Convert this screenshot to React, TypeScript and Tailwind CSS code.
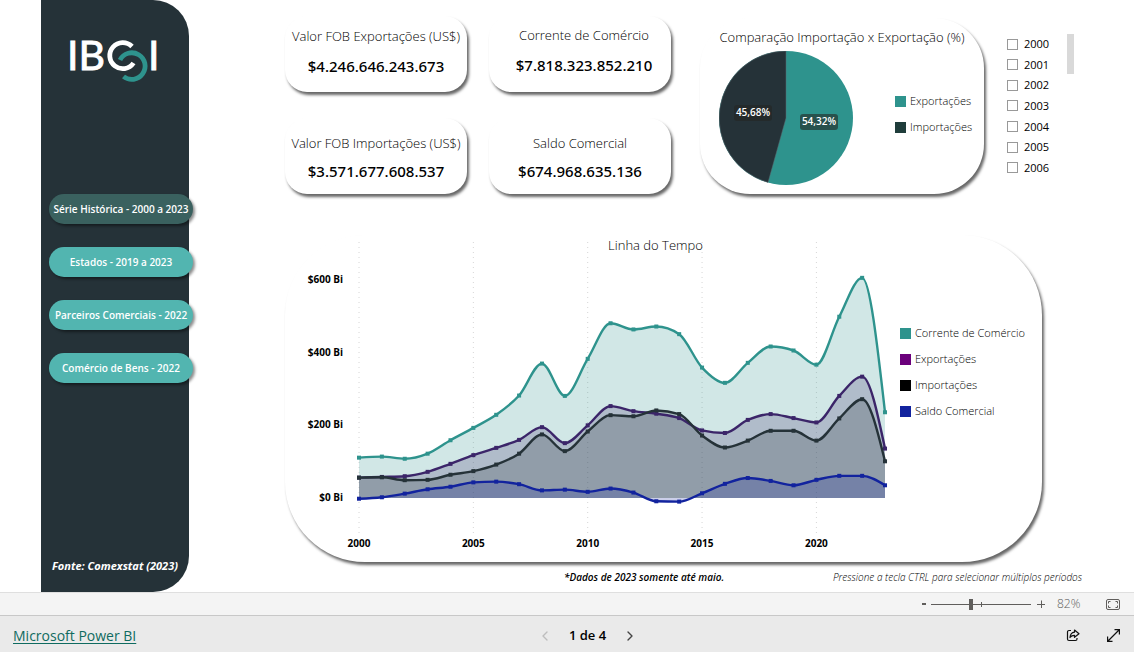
import { useState } from 'react';
import { ChevronLeft, ChevronRight } from 'lucide-react';

type Serie = { nome: string; cor: string; legenda: string; valores: number[] };

const PAGINAS = ['Série Histórica - 2000 a 2023', 'Estados - 2019 a 2023', 'Parceiros Comerciais - 2022', 'Comércio de Bens - 2022'];

const INDICADORES = [
  { titulo: 'Valor FOB Exportações (US$)', valor: '$4.246.646.243.673', classe: 'gap-2.5 pb-1.5' },
  { titulo: 'Corrente de Comércio', valor: '$7.818.323.852.210', classe: 'gap-2.5 pb-2 pl-2' },
  { titulo: 'Valor FOB Importações (US$)', valor: '$3.571.677.608.537', classe: 'gap-2 pt-0.5' },
  { titulo: 'Saldo Comercial', valor: '$674.968.635.136', classe: 'gap-2 pt-0.5' },
];

const ANOS_FILTRO = [2000, 2001, 2002, 2003, 2004, 2005, 2006];

// Valores anuais em bilhões de US$, 2000 a 2023
const SERIES: Serie[] = [
  {
    nome: 'Corrente de Comércio', cor: '#2e938d', legenda: 'bg-[#2e938d]',
    valores: [111, 114, 108, 122, 159, 193, 229, 282, 370, 281, 383, 481, 464, 472, 451, 359, 317, 372, 417, 406, 367, 499, 606, 236],
  },
  {
    nome: 'Exportações', cor: '#3b2569', legenda: 'bg-[#6b007b]',
    valores: [56, 58, 60, 72, 94, 118, 138, 160, 195, 151, 200, 253, 239, 232, 220, 186, 179, 215, 231, 220, 208, 281, 334, 136],
  },
  {
    nome: 'Importações', cor: '#253238', legenda: 'bg-black',
    valores: [56, 57, 49, 50, 64, 74, 92, 122, 175, 129, 183, 228, 225, 241, 231, 172, 139, 158, 185, 185, 158, 219, 272, 101],
  },
  {
    nome: 'Saldo Comercial', cor: '#12239e', legenda: 'bg-[#12239e]',
    valores: [-2, 2, 12, 24, 31, 43, 45, 38, 21, 23, 17, 26, 15, -9, -10, 13, 39, 55, 47, 35, 50, 61, 61, 35],
  },
];

const X0 = 74;
const PASSO = 22.87;
const Y0 = 263;
const px = (i: number) => X0 + i * PASSO;
const py = (v: number) => Y0 - v * 0.3633;

// Interpolação cúbica monótona em x
function curva(valores: number[]) {
  const ys = valores.map(py);
  const n = ys.length;
  const d = ys.slice(1).map((y, i) => (y - ys[i]) / PASSO);
  const m = ys.map((_, i) => {
    if (i === 0 || i === n - 1) return 0;
    const [a, b] = [d[i - 1], d[i]];
    if (a * b <= 0) return 0;
    return Math.sign(a) * Math.min(Math.abs(a), Math.abs(b), Math.abs(a + b) / 4) * 2;
  });
  m[0] = (3 * d[0] - m[1]) / 2;
  m[n - 1] = (3 * d[n - 2] - m[n - 2]) / 2;
  let path = `M${px(0)},${ys[0]}`;
  for (let i = 1; i < n; i++) {
    const t = PASSO / 3;
    path += `C${px(i - 1) + t},${ys[i - 1] + m[i - 1] * t} ${px(i) - t},${ys[i] - m[i] * t} ${px(i)},${ys[i]}`;
  }
  return path;
}

function Logo() {
  return (
    <svg viewBox="0 0 148 90" className="w-full" role="img" aria-label="IBCI">
      <g fill="#fff" stroke="#fff" strokeWidth="0.9" fontFamily="Lato, sans-serif" fontSize="41">
        <text x="26" y="70">IB</text>
        <text x="107" y="70">I</text>
      </g>
      <path d="M91 46.5A13 13 0 1 0 92.5 63" fill="none" stroke="#fff" strokeWidth="4.8" />
      <path d="M79 60A13.3 13.3 0 1 1 82.5 76.5" fill="none" stroke="#2e938d" strokeWidth="4.8" />
    </svg>
  );
}

function Pizza() {
  return (
    <svg viewBox="0 0 134 134" className="h-[134px] w-[134px] shrink-0">
      <circle cx="67" cy="67" r="67" fill="#2e938d" />
      <path d="M67 67L49 131.5A67 67 0 0 1 67 0Z" fill="#253238" stroke="#5d6b70" strokeWidth="0.5" />
      <rect x="15" y="54" width="38" height="16" rx="3" fill="#252423" fillOpacity="0.6" />
      <rect x="81" y="63" width="38" height="16" rx="3" fill="#252423" fillOpacity="0.6" />
      <g fill="#fff" fontSize="10" fontWeight="600" textAnchor="middle">
        <text x="34" y="65">45,68%</text>
        <text x="100" y="74">54,32%</text>
      </g>
    </svg>
  );
}

function GraficoLinhas() {
  return (
    <svg viewBox="0 0 605 327" className="block w-full">
      {[0, 5, 10, 15, 20].map((i) => (
        <g key={i}>
          <line x1={px(i)} x2={px(i)} y1="7" y2="300" stroke="#d6d6d6" strokeDasharray="1 4" />
          <text x={px(i)} y="312" textAnchor="middle" fontSize="10" fontWeight="700">{2000 + i}</text>
        </g>
      ))}
      {[0, 200, 400, 600].map((v) => (
        <text key={v} x="58" y={Math.round(py(v)) + 3} textAnchor="end" fontSize="10" fontWeight="700">{`$${v} Bi`}</text>
      ))}
      {SERIES.map((s) => (
        <path key={s.nome} d={`${curva(s.valores)}V${Y0}H${X0}Z`} fill={s.cor} fillOpacity="0.22" />
      ))}
      {SERIES.map((s) => (
        <g key={s.nome}>
          <path d={curva(s.valores)} fill="none" stroke={s.cor} strokeWidth="2.4" />
          {s.valores.map((v, i) => (
            <rect key={i} x={px(i) - 2} y={py(v) - 2} width="4" height="4" fill={s.cor} />
          ))}
        </g>
      ))}
    </svg>
  );
}

function ItemLegenda({ cor, children }: { cor: string; children: string }) {
  return (
    <li className="flex items-center gap-1 whitespace-nowrap">
      <span className={`h-[11px] w-[11px] ${cor}`} />
      {children}
    </li>
  );
}

export default function App() {
  const [pagina, setPagina] = useState(0);
  const [anos, setAnos] = useState<number[]>([]);
  const [zoom, setZoom] = useState(82);

  const alternarAno = (ano: number) =>
    setAnos((atual) => (atual.includes(ano) ? atual.filter((a) => a !== ano) : [...atual, ano]));

  return (
    <div className="flex min-h-screen flex-col bg-white font-['Open_Sans','Noto_Sans',sans-serif] text-black">
      <main className="flex flex-1">
        <aside className="ml-[41px] flex w-[148px] shrink-0 flex-col rounded-r-[36px] bg-[#253238]">
          <Logo />
          <nav className="mt-[104px] ml-2 flex w-36 flex-col gap-[23px]">
            {PAGINAS.map((p, i) => (
              <button
                key={p}
                onClick={() => setPagina(i)}
                className={`h-[30px] rounded-full text-[10px] font-semibold whitespace-nowrap text-white shadow-[2px_2px_3px_rgba(0,0,0,0.45)] ${i === pagina ? 'bg-[#3a615f]' : 'bg-[#52b5b0]'}`}
              >
                {p}
              </button>
            ))}
          </nav>
          <p className="mt-auto pb-4 text-center text-[11px] leading-5 font-bold whitespace-nowrap text-white italic">Fonte: Comexstat (2023)</p>
        </aside>

        <div className="ml-24 flex min-w-0 flex-1 flex-col pt-4">
          <div className="flex">
            <section className="grid grid-cols-[182px_182px] grid-rows-[76px_76px] gap-x-[22px] gap-y-[26px]">
              {INDICADORES.map((ind) => (
                <article key={ind.titulo} className={`flex flex-col items-center justify-center rounded-[22px] bg-white whitespace-nowrap shadow-[2px_3px_3px_rgba(0,0,0,0.6)] ${ind.classe}`}>
                  <h2 className="text-[13px] leading-5 font-light">{ind.titulo}</h2>
                  <p className="font-['Noto_Sans','Open_Sans',sans-serif] text-[15px] leading-5 font-medium">{ind.valor}</p>
                </article>
              ))}
            </section>

            <section className="mt-0.5 ml-[29px] min-w-0 flex-1 rounded-[50px] bg-white px-[19px] py-[9px] shadow-[2px_3px_3px_rgba(0,0,0,0.6)]">
              <h2 className="text-center text-[13px] leading-5 font-light whitespace-nowrap">Comparação Importação x Exportação (%)</h2>
              <div className="mt-1 flex items-center gap-[42px]">
                <Pizza />
                <ul className="flex flex-col gap-2.5 pb-2 text-[11px] leading-4 font-light">
                  <ItemLegenda cor="bg-[#2e938d]">Exportações</ItemLegenda>
                  <ItemLegenda cor="bg-[#1f3d3b]">Importações</ItemLegenda>
                </ul>
              </div>
            </section>

            <div className="mt-[18px] mr-[60px] ml-[23px] flex w-[67px] items-start justify-between">
              <ul className="flex h-36 flex-col justify-between text-[11px]">
                {ANOS_FILTRO.map((ano) => (
                  <li key={ano}>
                    <label className="flex items-center gap-1.5 leading-5">
                      <input
                        type="checkbox"
                        checked={anos.includes(ano)}
                        onChange={() => alternarAno(ano)}
                        className="h-[11px] w-[11px] appearance-none border border-[#999] bg-white checked:bg-[#333]"
                      />
                      {ano}
                    </label>
                  </li>
                ))}
              </ul>
              <span className="h-10 w-[7px] bg-[#d9d9d9]" />
            </div>
          </div>

          <section className="relative mt-[41px] mr-[92px] flex items-start rounded-[80px] bg-white shadow-[2px_3px_3px_rgba(0,0,0,0.6)]">
            <h2 className="absolute inset-x-0 top-0 pr-4 text-center text-[13px] leading-5 font-light">Linha do Tempo</h2>
            <div className="min-w-0 flex-1"><GraficoLinhas /></div>
            <ul className="mt-[90px] flex w-[152px] shrink-0 flex-col gap-2.5 pl-2.5 text-[11px] leading-4 font-light">
              {SERIES.map((s) => <ItemLegenda key={s.nome} cor={s.legenda}>{s.nome}</ItemLegenda>)}
            </ul>
          </section>

          <div className="mr-[52px] flex items-end justify-between pt-[7px] pb-[5px] pl-[279px] whitespace-nowrap italic">
            <p className="text-[10px] leading-4 font-semibold">*Dados de 2023 somente até maio.</p>
            <p className="text-[10px] leading-4 font-light">Pressione a tecla CTRL para selecionar múltiplos períodos</p>
          </div>
        </div>
      </main>

      <div className="flex h-6 items-center justify-end border-y border-t-[#dfdfdf] border-b-[#c8c8c8] bg-[#f4f4f4] pr-[14px] text-[#605e5c]">
        <button aria-label="Reduzir" className="h-0.5 w-1 bg-[#605e5c]" onClick={() => setZoom((z) => z - 10)} />
        <div className="relative ml-[5px] flex w-[100px] items-center">
          <input
            type="range"
            aria-label="Zoom"
            min={10}
            max={194}
            value={zoom}
            onChange={(e) => setZoom(Number(e.target.value))}
            className="h-3 w-full appearance-none bg-[linear-gradient(#605e5c,#605e5c)] bg-[length:100%_1px] bg-center bg-no-repeat [&::-webkit-slider-thumb]:h-[11px] [&::-webkit-slider-thumb]:w-1 [&::-webkit-slider-thumb]:appearance-none [&::-webkit-slider-thumb]:bg-[#605e5c]"
          />
          <span className="absolute left-1/2 h-[5px] w-px bg-[#605e5c]" />
        </div>
        <button aria-label="Ampliar" className="ml-1.5" onClick={() => setZoom((z) => z + 10)}>
          <svg viewBox="0 0 8 8" className="h-2 w-2" stroke="currentColor"><path d="M0 4.5H8M4.5 0.5V8" /></svg>
        </button>
        <span className="ml-3 w-[25px] text-xs font-light">{zoom}%</span>
        <button aria-label="Ajustar à página" className="ml-6">
          <svg viewBox="0 0 14 11" className="h-[11px] w-3.5" fill="none" stroke="currentColor">
            <rect x="0.5" y="0.5" width="13" height="10" rx="1.5" />
            <path d="M4.5 2.5H2.5V4.5M9.5 2.5H11.5V4.5M4.5 8.5H2.5V6.5M9.5 8.5H11.5V6.5" />
          </svg>
        </button>
      </div>

      <footer className="grid h-9 grid-cols-[1fr_auto_1fr] items-center bg-[#eaeaea] pt-[3px] pr-[14px] pl-[13px]">
        <a href="#" className="justify-self-start text-sm text-[#0f6b60] underline underline-offset-2">Microsoft Power BI</a>
        <div className="flex items-center gap-4 pl-[42px] text-[13px] font-semibold whitespace-nowrap">
          <button aria-label="Página anterior" disabled className="text-[#bdbdbd]"><ChevronLeft className="h-4 w-4" strokeWidth={2} /></button>
          <span>1 de 4</span>
          <button aria-label="Próxima página" className="text-[#444]"><ChevronRight className="h-4 w-4" strokeWidth={2} /></button>
        </div>
        <div className="flex items-center gap-[27px] justify-self-end">
          <button aria-label="Compartilhar">
            <svg viewBox="0 0 14 13" className="h-[13px] w-3.5" fill="none" stroke="#111" strokeWidth="1.2" strokeLinejoin="round">
              <path d="M5 1.5H3A1.5 1.5 0 0 0 1.5 3V10A1.5 1.5 0 0 0 3 11.5H9.5A1.5 1.5 0 0 0 11 10V9" />
              <path d="M8.5 1L13 4.7L8.5 8.3V6.3C6.5 6.2 5.2 6.9 4 8.5C4.3 5.3 5.8 3.4 8.5 3.2Z" />
            </svg>
          </button>
          <button aria-label="Tela cheia">
            <svg viewBox="0 0 13 13" className="h-[13px] w-[13px]" fill="none" stroke="#111" strokeWidth="1.2">
              <path d="M1 12L12 1M7.5 0.6H12.4V5.5M0.6 7.5V12.4H5.5" />
            </svg>
          </button>
        </div>
      </footer>
    </div>
  );
}
